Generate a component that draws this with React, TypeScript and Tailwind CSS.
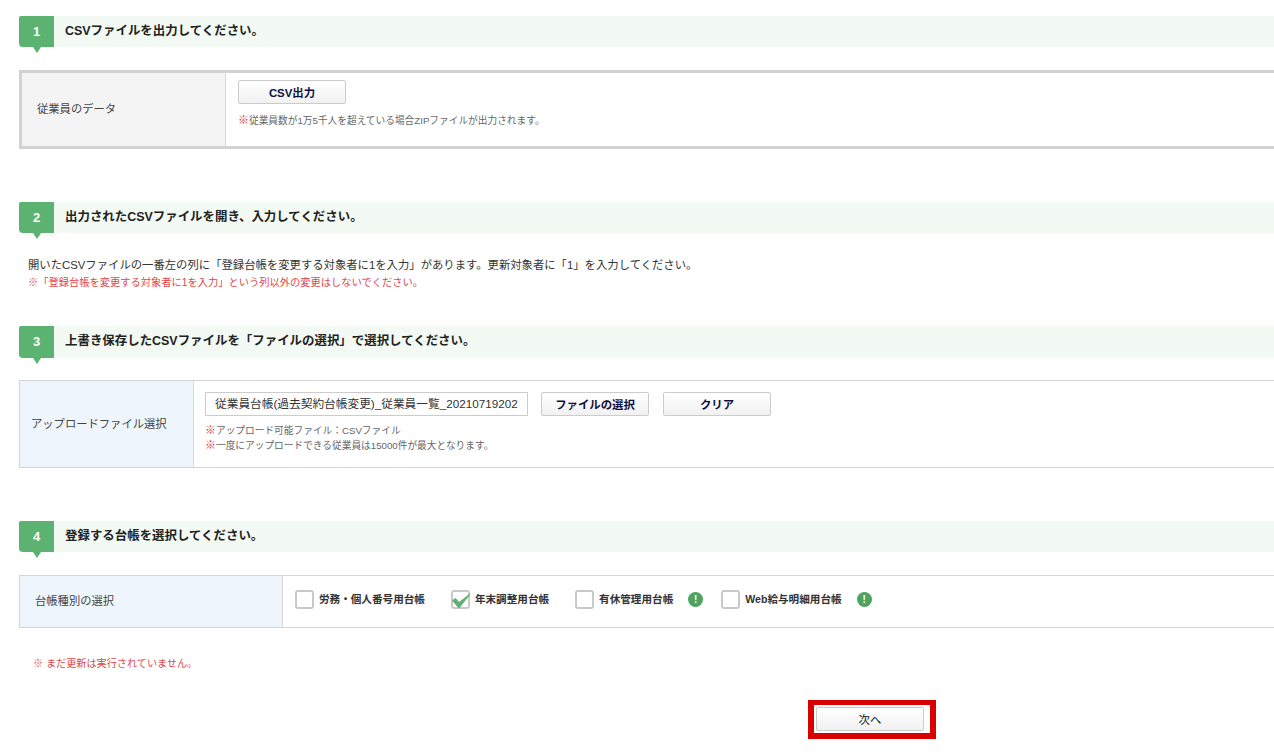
import React from "react";

const font = { fontFamily: '"Liberation Sans", "Noto Sans CJK JP", sans-serif' };

function Header({ n, title, h = "h-[31px]" }: { n: number; title: string; h?: string }) {
  return (
    <div className={`flex ${h} bg-[#f3f9f3] ml-[19px] items-center`}>
      <div className="relative w-[35px] h-full bg-[#5cb270] rounded-tl-[2px] rounded-bl-[4px] flex items-center justify-center text-white text-[13px] font-bold">
        {n}
        <span className="absolute left-[14px] top-full w-0 h-0 border-x-[4px] border-x-transparent border-t-[6px] border-t-[#5cb270]" />
      </div>
      <div className="ml-[11px] pb-[1px] text-[12.45px] font-bold text-[#222]">{title}</div>
    </div>
  );
}

function Btn({ children, w, extra = "" }: { children: React.ReactNode; w: string; extra?: string }) {
  return (
    <button className={`${w} h-[24px] rounded-[2px] border border-[#ccc] bg-gradient-to-b from-white to-[#f1f1f1] text-[11.4px] font-bold text-[#101040] flex items-center justify-center pt-[3px] ${extra}`}>
      {children}
    </button>
  );
}

function Mark() {
  return <span className="text-[11px] leading-none text-[#e03a3a] font-bold">※</span>;
}

function Check({ checked, label, info }: { checked?: boolean; label: string; info?: boolean }) {
  return (
    <div className="flex items-center">
      <span className="relative w-[19px] h-[19px] rounded-[3px] border-2 border-[#c9c9c9] bg-white shrink-0">
        {checked && (
          <svg viewBox="0 0 20 20" className="absolute left-[-2px] top-[-2px] w-[20px] h-[20px]">
            <path d="M1.5 10.5 L8 18 L19 4 L8 12.5 L4.5 8.5 Z" fill="#5cb270" stroke="#5cb270" strokeWidth="1" strokeLinejoin="round" />
          </svg>
        )}
      </span>
      <span className="ml-[5px] text-[10.6px] font-bold text-[#333]">{label}</span>
      {info && (
        <span className="ml-[15px] w-[15px] h-[15px] rounded-full bg-[#4ea35f] text-white text-[10px] font-bold flex items-center justify-center">!</span>
      )}
    </div>
  );
}

export default function App() {
  return (
    <div style={font} className="w-[1274px] h-[755px] overflow-hidden bg-white pt-[16px] text-[#333]">
      <Header n={1} title="CSVファイルを出力してください。" />

      <div className="mt-[23px] ml-[19px] h-[79px] flex border-y-[3px] border-l-[3px] border-[#d2d2d2]">
        <div className="w-[204px] bg-[#f4f4f4] border-r border-[#d8d8d8] flex items-center pl-[15px] text-[11.3px] text-[#444]">
          従業員のデータ
        </div>
        <div className="flex-1 pl-[12px] pt-[7px]">
          <Btn w="w-[108px]">CSV出力</Btn>
          <div className="mt-[10px] text-[9.7px] text-[#666] leading-[14px]">
            <Mark />従業員数が1万5千人を超えている場合ZIPファイルが出力されます。
          </div>
        </div>
      </div>

      <div className="mt-[53px]">
        <Header n={2} title="出力されたCSVファイルを開き、入力してください。" />
      </div>
      <div className="mt-[24px] ml-[28px] text-[11.35px] leading-[16px] text-[#333]">
        開いたCSVファイルの一番左の列に「登録台帳を変更する対象者に1を入力」があります。更新対象者に「1」を入力してください。
      </div>
      <div className="mt-[2px] ml-[28px] text-[10.25px] leading-[16px] text-[#e0474c]">
        ※「登録台帳を変更する対象者に1を入力」という列以外の変更はしないでください。
      </div>

      <div className="mt-[35px]">
        <Header n={3} title="上書き保存したCSVファイルを「ファイルの選択」で選択してください。" h="h-[32px]" />
      </div>

      <div className="mt-[22px] ml-[19px] h-[88px] flex border-y border-l border-[#d4d4d4]">
        <div className="w-[174px] bg-[#eef5fc] border-r border-[#d8d8d8] flex items-center pl-[11px] text-[11.3px] text-[#444]">
          アップロードファイル選択
        </div>
        <div className="flex-1 pl-[11px] pt-[11px]">
          <div className="flex items-center">
            <div className="w-[323px] h-[24px] border border-[#ccc] flex items-center pl-[9px] text-[11.7px] text-[#333] whitespace-nowrap overflow-hidden">
              従業員台帳(過去契約台帳変更)_従業員一覧_20210719202
            </div>
            <Btn w="w-[108px]" extra="ml-[13px]">ファイルの選択</Btn>
            <Btn w="w-[108px]" extra="ml-[14px]">クリア</Btn>
          </div>
          <div className="mt-[7px] text-[9.7px] leading-[15px] text-[#666]">
            <div><Mark />アップロード可能ファイル：CSVファイル</div>
            <div><Mark />一度にアップロードできる従業員は15000件が最大となります。</div>
          </div>
        </div>
      </div>

      <div className="mt-[53px]">
        <Header n={4} title="登録する台帳を選択してください。" />
      </div>

      <div className="mt-[23px] ml-[19px] h-[53px] flex border-y border-l border-[#d4d4d4]">
        <div className="w-[263px] bg-[#eef5fc] border-r border-[#d8d8d8] flex items-center pl-[15px] text-[11.3px] text-[#444]">
          台帳種別の選択
        </div>
        <div className="flex-1 flex items-center pl-[12px] pb-[4px]">
          <Check label="労務・個人番号用台帳" />
          <div className="ml-[26px]"><Check checked label="年末調整用台帳" /></div>
          <div className="ml-[26px]"><Check label="有休管理用台帳" info /></div>
          <div className="ml-[18px]"><Check label="Web給与明細用台帳" info /></div>
        </div>
      </div>

      <div className="mt-[29px] ml-[33px] text-[10.15px] leading-[14px] text-[#e0474c]">
        ※ まだ更新は実行されていません。
      </div>

      <div className="mt-[29px] ml-[808px] w-[128px] h-[39px] border-x-[6px] border-t-[5px] border-b-[6px] border-[#d90000] flex items-center pl-[2px] bg-white">
        <Btn w="w-[108px]" extra="!font-normal !text-[#111]">次へ</Btn>
      </div>
    </div>
  );
}
